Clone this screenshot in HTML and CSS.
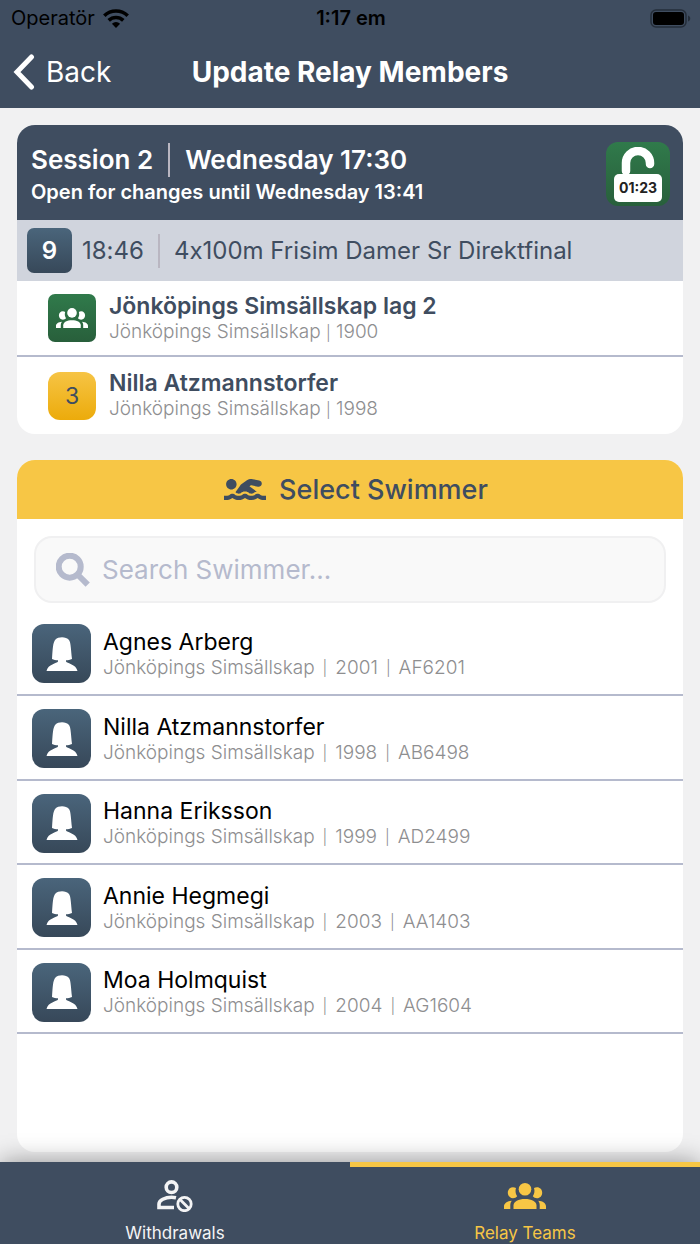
FILE: index.html
```html
<!DOCTYPE html>
<html lang="en">
<head>
<meta charset="utf-8">
<meta name="viewport" content="width=device-width, initial-scale=1">
<title>Update Relay Members</title>
<link rel="stylesheet" href="styles.css">
</head>
<body>
<svg class="symbols" aria-hidden="true">
  <symbol id="group" viewBox="0 0 42 26">
    <circle cx="21" cy="6.3" r="6.3"/>
    <path d="M9.5 26v-3.5c0-4 5-6.5 11.5-6.5s11.5 2.500 11.500 6.500V26z"/>
    <path d="M9 4.300C6 4.300 3.800 6.700 3.800 9.700S6 15.200 9 15.200c1.700 0 3.200-.7 4.200-1.900-1.700-2.600-2.100-5.200-1.200-8.200-.9-.5-1.900-.8-3-.8zM0 26v-2.700c0-3 3.200-5.300 7.800-5.500-1 1.300-1.500 2.700-1.500 4.500V26z"/>
    <path d="M33 4.300c3 0 5.200 2.400 5.200 5.400S36 15.200 33 15.200c-1.700 0-3.200-.7-4.200-1.900 1.700-2.600 2.100-5.200 1.200-8.200.9-.5 1.900-.8 3-.8zM42 26v-2.700c0-3-3.200-5.300-7.800-5.500 1 1.300 1.500 2.700 1.500 4.500V26z"/>
  </symbol>
  <symbol id="bust" viewBox="0 0 32 34">
    <path d="M9.500 2.500C12-.3 20-.8 23 3c2 3 1.800 9 3 19-2 1-4 1.200-6 1.200v1.300c1 2 10 2.500 11.500 9.500h-31C2 27 11 26.500 12 24.500v-1.300c-2 0-4.500-.2-6-1.200C6.700 12 6.800 5.500 9.500 2.500z"/>
  </symbol>
</svg>

<header class="top">
  <div class="status">
    <div class="carrier">
      <span>Operatör</span>
      <svg class="wifi" viewBox="0 0 26 19" aria-hidden="true">
        <path d="M13 19l-4.100-4.300a6 6 0 0 1 8.200 0z"/>
        <path class="wave" d="M5.700 11.400a10.600 10.600 0 0 1 14.600 0M1.300 6.700a17 17 0 0 1 23.400 0"/>
      </svg>
    </div>
    <span class="clock">1:17 em</span>
    <svg class="battery" viewBox="0 0 41 19" aria-hidden="true">
      <rect class="shell" x="1" y="1" width="35" height="17" rx="5"/>
      <rect x="3" y="3" width="31" height="13" rx="3"/>
      <path class="cap" d="M38 6.500c3 1 3 5 0 6z"/>
    </svg>
  </div>
  <div class="bar">
    <button class="back" type="button">
      <svg class="chevron" viewBox="0 0 22 36" aria-hidden="true"><path d="M18.500 3L4 18l14.500 15"/></svg>
      <span>Back</span>
    </button>
    <h1 class="title">Update Relay Members</h1>
  </div>
</header>

<main class="content">
  <section class="card">
    <div class="session">
      <div>
        <h2 class="session-title"><span>Session 2</span><span class="rule"></span><span>Wednesday 17:30</span></h2>
        <p class="session-note">Open for changes until Wednesday 13:41</p>
      </div>
      <div class="lock">
        <svg class="shackle" viewBox="0 0 48 27" aria-hidden="true"><path d="M12 24V16a12 12 0 0 1 24 0v1"/></svg>
        <span class="countdown">01:23</span>
      </div>
    </div>
    <div class="event">
      <span class="event-number">9</span>
      <span class="event-time">18:46</span>
      <span class="rule"></span>
      <span>4x100m Frisim Damer Sr Direktfinal</span>
    </div>
    <div class="entry">
      <span class="badge team"><svg class="team-icon" aria-hidden="true"><use href="#group"/></svg></span>
      <div>
        <p class="entry-name">Jönköpings Simsällskap lag 2</p>
        <p class="detail">Jönköpings Simsällskap <span class="pipe">|</span> 1900</p>
      </div>
    </div>
    <div class="entry second">
      <span class="badge leg">3</span>
      <div>
        <p class="entry-name">Nilla Atzmannstorfer</p>
        <p class="detail">Jönköpings Simsällskap <span class="pipe">|</span> 1998</p>
      </div>
    </div>
  </section>

  <section class="card picker">
    <h2 class="picker-title">
      <svg class="swimmer" viewBox="0 96 640 320" aria-hidden="true"><path d="M189.610 310.580c3.540 3.260 15.270 9.420 34.390 9.420s30.860-6.160 34.390-9.420c16.020-14.770 34.500-22.580 53.460-22.580h16.300c18.960 0 37.450 7.810 53.460 22.580 3.540 3.260 15.270 9.420 34.390 9.420s30.860-6.160 34.390-9.420c14.860-13.710 31.880-21.120 49.390-22.160l-112.840-80.600 18-12.860c3.640-2.580 8.280-3.520 12.620-2.610l100.350 21.530c25.910 5.530 51.440-10.970 57-36.880 5.550-25.920-10.950-51.440-36.880-57L437.680 98.470c-30.730-6.580-63.020.12-88.560 18.380l-80.020 57.170c-10.380 7.390-19.360 16.440-26.720 26.940L173.750 299c5.470 3.230 10.820 6.930 15.860 11.580zM624 352h-16c-26.040 0-45.800-8.420-56.090-17.900-8.900-8.210-19.660-14.100-31.770-14.100h-16.300c-12.110 0-22.870 5.890-31.770 14.100C461.800 343.580 442.040 352 416 352s-45.800-8.420-56.090-17.900c-8.900-8.210-19.660-14.100-31.770-14.100h-16.300c-12.110 0-22.870 5.890-31.770 14.100C269.800 343.580 250.040 352 224 352s-45.800-8.420-56.090-17.900c-8.900-8.210-19.660-14.100-31.770-14.100h-16.300c-12.110 0-22.870 5.890-31.770 14.100C77.800 343.580 58.040 352 32 352H0v64h32c38.620 0 72.720-12.190 96-31.840 23.280 19.660 57.380 31.840 96 31.840s72.720-12.190 96-31.840c23.280 19.660 57.380 31.840 96 31.840s72.720-12.190 96-31.840c23.280 19.660 57.380 31.840 96 31.840h32v-64zM112 256c44.180 0 80-35.820 80-80s-35.820-80-80-80-80 35.820-80 80 35.820 80 80 80z"/></svg>
      <span>Select Swimmer</span>
    </h2>
    <label class="search">
      <svg class="lens" viewBox="0 0 34 34" aria-hidden="true"><circle cx="13.700" cy="13.700" r="11"/><path d="M22 22l9.700 9.700"/></svg>
      <input class="search-input" type="search" placeholder="Search Swimmer..." aria-label="Search Swimmer">
    </label>
    <ul class="swimmers">
      <li><button class="person" type="button">
        <span class="avatar"><svg class="bust" aria-hidden="true"><use href="#bust"/></svg></span>
        <span><span class="person-name">Agnes Arberg</span><span class="detail spaced"><span>Jönköpings Simsällskap</span><span class="pipe">|</span><span>2001</span><span class="pipe">|</span><span>AF6201</span></span></span>
      </button></li>
      <li><button class="person" type="button">
        <span class="avatar"><svg class="bust" aria-hidden="true"><use href="#bust"/></svg></span>
        <span><span class="person-name">Nilla Atzmannstorfer</span><span class="detail spaced"><span>Jönköpings Simsällskap</span><span class="pipe">|</span><span>1998</span><span class="pipe">|</span><span>AB6498</span></span></span>
      </button></li>
      <li><button class="person" type="button">
        <span class="avatar"><svg class="bust" aria-hidden="true"><use href="#bust"/></svg></span>
        <span><span class="person-name">Hanna Eriksson</span><span class="detail spaced"><span>Jönköpings Simsällskap</span><span class="pipe">|</span><span>1999</span><span class="pipe">|</span><span>AD2499</span></span></span>
      </button></li>
      <li><button class="person" type="button">
        <span class="avatar"><svg class="bust" aria-hidden="true"><use href="#bust"/></svg></span>
        <span><span class="person-name">Annie Hegmegi</span><span class="detail spaced"><span>Jönköpings Simsällskap</span><span class="pipe">|</span><span>2003</span><span class="pipe">|</span><span>AA1403</span></span></span>
      </button></li>
      <li><button class="person" type="button">
        <span class="avatar"><svg class="bust" aria-hidden="true"><use href="#bust"/></svg></span>
        <span><span class="person-name">Moa Holmquist</span><span class="detail spaced"><span>Jönköpings Simsällskap</span><span class="pipe">|</span><span>2004</span><span class="pipe">|</span><span>AG1604</span></span></span>
      </button></li>
    </ul>
  </section>
</main>

<nav class="tabs">
  <a class="tab" href="#withdrawals">
    <svg class="tab-icon withdraw" viewBox="0 0 36 32" aria-hidden="true">
      <circle cx="14.500" cy="7.200" r="5.300"/>
      <path d="M19 17.800c-1.400-.3-2.900-.5-4.500-.5C8 17.300 2 20.300 2 24v3.500h15"/>
      <circle class="ban" cx="27.500" cy="24" r="6.700"/>
      <path class="ban" d="M22.800 19.300l9.400 9.400"/>
    </svg>
    <span>Withdrawals</span>
  </a>
  <a class="tab active" href="#relay-teams" aria-current="page">
    <svg class="tab-icon teams" aria-hidden="true"><use href="#group"/></svg>
    <span>Relay Teams</span>
  </a>
</nav>
</body>
</html>
```

FILE: styles.css
```css
:root {
  --navy: #3f4d60;
  --yellow: #f7c645;
  --line: #b5bacd;
}

* {
  box-sizing: border-box;
}

body {
  display: flex;
  flex-direction: column;
  min-height: 100vh;
  margin: 0;
  background: #f1f1f2;
  color: var(--navy);
  font-family: Inter, "Liberation Sans", sans-serif;
  font-size: 23px;
}

h1, h2, p, ul {
  margin: 0;
  padding: 0;
}

button {
  border: 0;
  background: none;
  color: inherit;
  font: inherit;
  text-align: left;
}

svg {
  flex: none;
  fill: currentColor;
}

.symbols {
  position: absolute;
  width: 0;
  height: 0;
}

/* Header */
.top {
  height: 108px;
  background: var(--navy);
  color: #fff;
}

.status {
  display: grid;
  grid-template-columns: 1fr auto 1fr;
  align-items: center;
  height: 36px;
  padding: 0 9px 0 11px;
  color: #000;
  font-size: 20px;
}

.carrier {
  display: flex;
  align-items: center;
  gap: 8px;
}

.wifi {
  width: 26px;
  height: 19px;
}

.wave {
  fill: none;
  stroke: currentColor;
  stroke-width: 3.6;
}

.clock {
  font-weight: 600;
}

.battery {
  justify-self: end;
  width: 41px;
  height: 19px;
}

.shell {
  fill: none;
  stroke: #252e3a;
  stroke-width: 1.5;
}

.cap {
  fill: #252e3a;
}

.bar {
  display: grid;
  grid-template-columns: 1fr auto 1fr;
  align-items: center;
  height: 71px;
  padding: 0 13px;
}

.back {
  display: flex;
  align-items: center;
  gap: 11px;
  padding: 0;
  font-size: 28px;
}

.chevron {
  width: 22px;
  height: 36px;
  fill: none;
  stroke: currentColor;
  stroke-width: 5;
  stroke-linecap: round;
}

.title {
  font-size: 28px;
  font-weight: 700;
}

/* Cards */
.content {
  display: flex;
  flex: 1;
  flex-direction: column;
  gap: 26px;
  padding: 17px 17px 10px;
}

.card {
  overflow: hidden;
  border-radius: 18px;
  background: #fff;
}

.session {
  display: flex;
  align-items: center;
  justify-content: space-between;
  height: 95px;
  padding: 3px 13px 0 14px;
  background: var(--navy);
  color: #fff;
}

.session-title {
  display: flex;
  align-items: center;
  gap: 15px;
  font-size: 26px;
  font-weight: 600;
  line-height: 36px;
}

.rule {
  width: 2px;
  height: 34px;
  background: #b9b6c1;
}

.session-note {
  font-size: 20px;
  font-weight: 600;
  line-height: 28px;
}

.lock {
  display: flex;
  flex-direction: column;
  align-items: center;
  width: 64px;
  height: 64px;
  padding-top: 5px;
  border-radius: 12px;
  background: linear-gradient(#307a4b, #285f3b);
}

.shackle {
  width: 48px;
  height: 27px;
  fill: none;
  stroke: #fff;
  stroke-width: 8.5;
  stroke-linecap: round;
}

.countdown {
  width: 48px;
  border-radius: 5px;
  background: #fff;
  color: #222;
  font-size: 14px;
  font-weight: 700;
  line-height: 28px;
  text-align: center;
}

.event {
  display: flex;
  align-items: center;
  gap: 14px;
  height: 61px;
  padding: 0 10px;
  background: #d0d4dd;
  font-size: 24px;
  font-feature-settings: "calt" 0;
}

.event-number {
  width: 45px;
  border-radius: 7px;
  background: linear-gradient(#4a657b, #374859);
  color: #fff;
  font-weight: 600;
  line-height: 45px;
  text-align: center;
}

.event-time {
  margin-left: -4px;
}

.entry {
  display: flex;
  align-items: center;
  gap: 13px;
  height: 74px;
  padding-left: 31px;
}

.second {
  height: 79px;
  border-top: 2px solid var(--line);
}

.badge {
  display: grid;
  place-items: center;
  width: 48px;
  height: 48px;
}

.team {
  border-radius: 7px;
  background: linear-gradient(#307a4b, #285f3b);
  color: #fff;
}

.team-icon {
  width: 32px;
  height: 20px;
}

.leg {
  border-radius: 12px;
  background: linear-gradient(#f6c445, #ecab0b);
}

.entry-name {
  font-weight: 600;
  line-height: 28px;
}

.detail {
  color: #8e8e90;
  font-size: 19px;
  font-weight: 300;
  line-height: 24px;
}

.pipe {
  font-size: 15px;
}

/* Swimmer list */
.picker {
  flex: 1;
}

.picker-title {
  display: flex;
  align-items: center;
  justify-content: center;
  gap: 13px;
  height: 59px;
  padding-left: 12px;
  background: var(--yellow);
  font-size: 27px;
  font-weight: 500;
}

.swimmer {
  width: 42px;
  height: 21px;
}

.search {
  display: flex;
  align-items: center;
  gap: 12px;
  height: 67px;
  margin: 17px 17px 8px;
  padding: 0 20px;
  border: 2px solid #f0f0f1;
  border-radius: 18px;
  background: #f9f9f9;
  color: var(--line);
}

.lens {
  width: 34px;
  height: 34px;
  fill: none;
  stroke: currentColor;
  stroke-width: 6;
}

.search-input {
  flex: 1;
  min-width: 0;
  padding: 0;
  border: 0;
  outline: 0;
  background: none;
  color: var(--navy);
  font: inherit;
  font-size: 26px;
}

.search-input::placeholder {
  color: var(--line);
}

.swimmers {
  list-style: none;
}

.swimmers li {
  border-bottom: 2px solid var(--line);
}

.person {
  display: flex;
  align-items: center;
  gap: 12px;
  width: 100%;
  height: 83px;
  padding: 2px 15px 0;
}

.swimmers li:nth-child(odd) + li .person {
  height: 83px;
}

.swimmers li:nth-child(even) + li .person {
  height: 82px;
}

.avatar {
  display: grid;
  place-items: center;
  width: 59px;
  height: 59px;
  border-radius: 12px;
  background: linear-gradient(#4a657b, #374859);
  color: #fff;
}

.bust {
  width: 32px;
  height: 34px;
}

.person-name {
  display: block;
  color: #000;
  line-height: 28px;
}

.spaced {
  display: flex;
  gap: 8px;
}

/* Tab bar */
.tabs {
  display: grid;
  grid-template-columns: 1fr 1fr;
  height: 82px;
  background: var(--navy);
  box-shadow: 0 0 24px rgb(0 0 0 / 40%);
}

.tab {
  display: flex;
  flex-direction: column;
  align-items: center;
  justify-content: space-between;
  padding-top: 13px;
  border-top: 5px solid transparent;
  color: #f4f4f5;
  font-size: 17px;
  line-height: 22px;
  text-decoration: none;
}

.active {
  border-color: var(--yellow);
  color: var(--yellow);
}

.tab-icon {
  height: 32px;
}

.withdraw {
  width: 36px;
  fill: none;
  stroke: currentColor;
  stroke-width: 3.6;
}

.ban {
  stroke-width: 2.8;
}

.teams {
  width: 42px;
}
```
